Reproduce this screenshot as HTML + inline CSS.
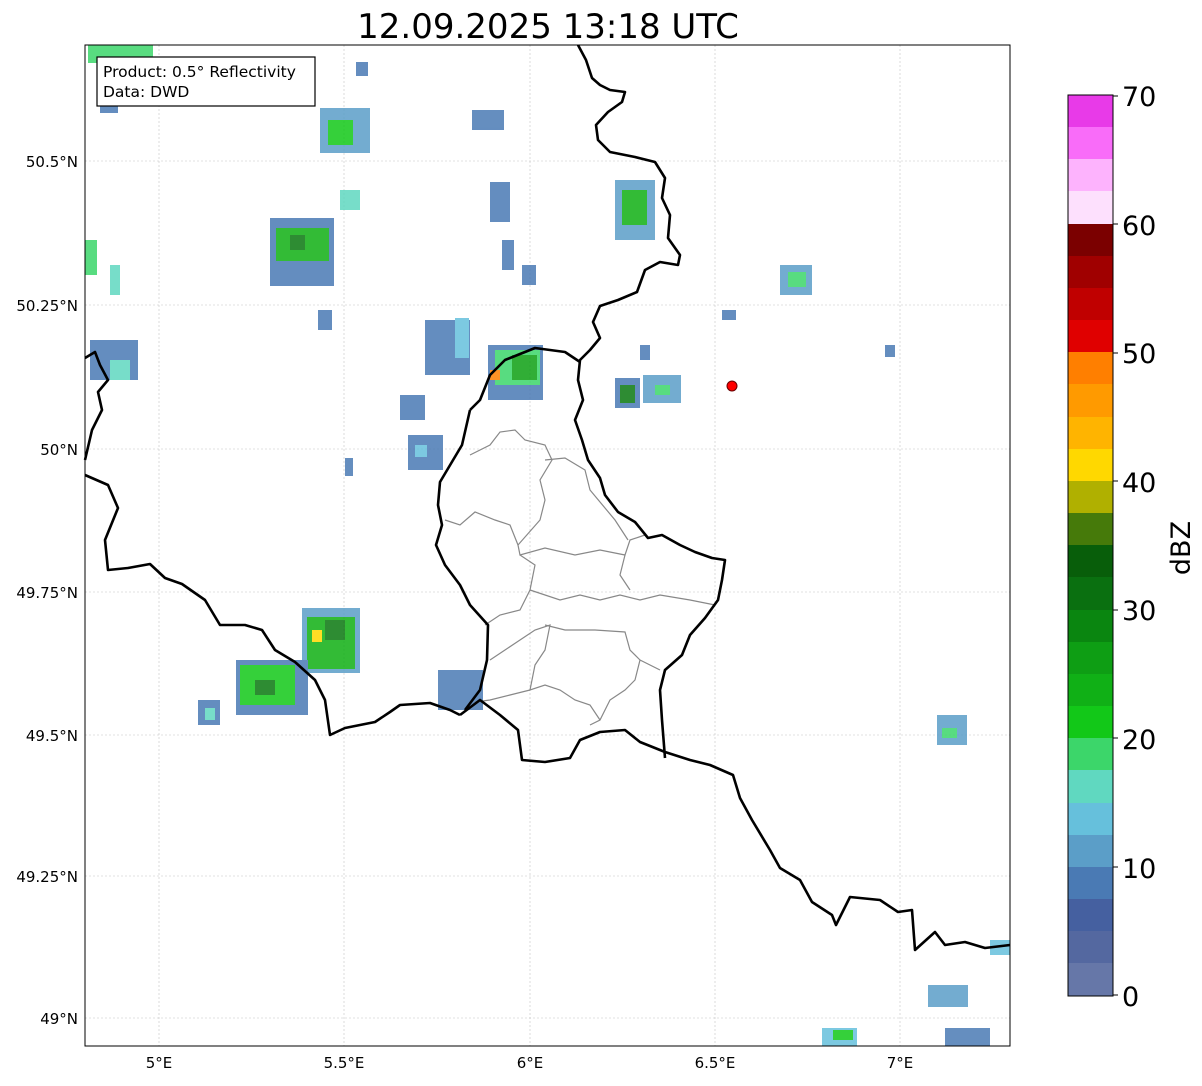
<!DOCTYPE html>
<html><head><meta charset="utf-8"><style>
body{margin:0;background:#fff;width:1202px;height:1081px;overflow:hidden;font-family:"Liberation Sans","DejaVu Sans",sans-serif}
</style></head><body>
<svg width="1202" height="1081" xmlns="http://www.w3.org/2000/svg" font-family="DejaVu Sans, Liberation Sans, sans-serif">
<rect width="1202" height="1081" fill="#fff"/>
<text x="548" y="38" font-size="34" text-anchor="middle" fill="#000">12.09.2025 13:18 UTC</text>
<g stroke="#c4c4c4" stroke-width="0.6" stroke-dasharray="2,2">
<line x1="159" y1="45" x2="159" y2="1046"/><line x1="344" y1="45" x2="344" y2="1046"/><line x1="530" y1="45" x2="530" y2="1046"/><line x1="715" y1="45" x2="715" y2="1046"/><line x1="900" y1="45" x2="900" y2="1046"/>
<line x1="85" y1="161" x2="1010" y2="161"/><line x1="85" y1="305" x2="1010" y2="305"/><line x1="85" y1="449" x2="1010" y2="449"/><line x1="85" y1="592" x2="1010" y2="592"/><line x1="85" y1="735" x2="1010" y2="735"/><line x1="85" y1="876" x2="1010" y2="876"/><line x1="85" y1="1018" x2="1010" y2="1018"/>
</g>
<g opacity="0.85">
<rect x="88" y="45" width="65" height="18" fill="#3cd66a"/><rect x="100" y="63" width="18" height="50" fill="#4a7ab4"/>
<rect x="320" y="108" width="50" height="45" fill="#5b9ec8"/><rect x="328" y="120" width="25" height="25" fill="#12c818"/>
<rect x="356" y="62" width="12" height="14" fill="#4a7ab4"/><rect x="472" y="110" width="32" height="20" fill="#4a7ab4"/>
<rect x="270" y="218" width="64" height="68" fill="#4a7ab4"/><rect x="276" y="228" width="53" height="33" fill="#10b014"/><rect x="290" y="235" width="15" height="15" fill="#0a7810"/>
<rect x="340" y="190" width="20" height="20" fill="#60d8c0"/>
<rect x="85" y="240" width="12" height="35" fill="#3cd66a"/><rect x="110" y="265" width="10" height="30" fill="#60d8c0"/>
<rect x="318" y="310" width="14" height="20" fill="#4a7ab4"/>
<rect x="90" y="340" width="48" height="40" fill="#4a7ab4"/><rect x="110" y="360" width="20" height="20" fill="#60d8c0"/>
<rect x="425" y="320" width="45" height="55" fill="#4a7ab4"/><rect x="455" y="318" width="14" height="40" fill="#66c0dc"/>
<rect x="488" y="345" width="55" height="55" fill="#4a7ab4"/><rect x="495" y="350" width="45" height="35" fill="#3cd66a"/><rect x="512" y="355" width="25" height="25" fill="#0ea014"/><rect x="490" y="370" width="10" height="10" fill="#ff7f00"/>
<rect x="490" y="182" width="20" height="40" fill="#4a7ab4"/><rect x="502" y="240" width="12" height="30" fill="#4a7ab4"/><rect x="522" y="265" width="14" height="20" fill="#4a7ab4"/>
<rect x="615" y="180" width="40" height="60" fill="#5b9ec8"/><rect x="622" y="190" width="25" height="35" fill="#10b014"/>
<rect x="615" y="378" width="25" height="30" fill="#4a7ab4"/><rect x="620" y="385" width="15" height="18" fill="#0a7810"/>
<rect x="643" y="375" width="38" height="28" fill="#5b9ec8"/><rect x="655" y="385" width="15" height="10" fill="#3cd66a"/>
<rect x="640" y="345" width="10" height="15" fill="#4a7ab4"/><rect x="722" y="310" width="14" height="10" fill="#4a7ab4"/>
<rect x="780" y="265" width="32" height="30" fill="#5b9ec8"/><rect x="788" y="272" width="18" height="15" fill="#3cd66a"/>
<rect x="885" y="345" width="10" height="12" fill="#4a7ab4"/>
<rect x="400" y="395" width="25" height="25" fill="#4a7ab4"/><rect x="408" y="435" width="35" height="35" fill="#4a7ab4"/><rect x="415" y="445" width="12" height="12" fill="#66c0dc"/>
<rect x="345" y="458" width="8" height="18" fill="#4a7ab4"/>
<rect x="302" y="608" width="58" height="65" fill="#5b9ec8"/><rect x="307" y="617" width="48" height="52" fill="#10b014"/><rect x="312" y="630" width="10" height="12" fill="#ffd800"/><rect x="325" y="620" width="20" height="20" fill="#0a7810"/>
<rect x="236" y="660" width="72" height="55" fill="#4a7ab4"/><rect x="240" y="665" width="55" height="40" fill="#12c818"/><rect x="255" y="680" width="20" height="15" fill="#0a7810"/>
<rect x="198" y="700" width="22" height="25" fill="#4a7ab4"/><rect x="205" y="708" width="10" height="12" fill="#60d8c0"/>
<rect x="438" y="670" width="45" height="40" fill="#4a7ab4"/>
<rect x="937" y="715" width="30" height="30" fill="#5b9ec8"/><rect x="942" y="728" width="15" height="10" fill="#3cd66a"/>
<rect x="990" y="940" width="20" height="15" fill="#66c0dc"/>
<rect x="928" y="985" width="40" height="22" fill="#5b9ec8"/>
<rect x="822" y="1028" width="35" height="18" fill="#66c0dc"/><rect x="833" y="1030" width="20" height="10" fill="#12c818"/>
<rect x="945" y="1028" width="45" height="18" fill="#4a7ab4"/>
</g>
<g fill="none" stroke="#888" stroke-width="1.2">
<polyline points="470,455 490,445 500,432 515,430 525,440 545,445 552,460 540,480 545,500 540,520 518,545 520,555 545,548 575,555 600,550 625,555 630,540 645,535"/>
<polyline points="445,520 460,525 475,512 495,520 510,525 518,545"/>
<polyline points="545,460 565,458 585,470 590,490 615,520 628,540"/>
<polyline points="520,555 535,565 530,590 520,610 500,615 485,625"/>
<polyline points="530,590 560,600 580,595 600,600 620,595 640,600 660,595 690,600 715,605"/>
<polyline points="625,555 620,575 630,590"/>
<polyline points="545,625 565,630 595,630 625,632 630,650 640,660 635,680 625,690 610,700 600,720 590,725"/>
<polyline points="490,660 505,650 520,640 535,630 550,625 545,650 535,665 530,690 545,685 560,690 575,700 590,705 600,720"/>
<polyline points="530,690 510,695 490,700 475,702"/>
<polyline points="640,660 660,670"/>
</g>
<g fill="none" stroke="#000" stroke-width="2.6" stroke-linejoin="round">
<polyline points="578,45 586,60 592,78 600,85 610,90 625,92 622,102 608,112 596,125 598,140 610,152 635,157 655,162 665,178 662,198 670,215 668,238 680,255 678,265 660,262 645,270 637,292 618,300 600,306 593,322 600,338 590,350 580,360 578,380 583,400 575,420 582,440 588,460 600,478 605,495 618,512 635,522 648,538 662,535 680,545 695,552 712,558 725,560 722,580 718,600 705,618 690,635 682,655 665,670 660,690 662,720 665,758"/>
<polyline points="460,715 480,700 500,715 518,730 522,760 545,762 570,758 580,740 600,732 625,730 640,742 665,752 690,760 710,765 733,775 740,798 752,820 770,850 780,868 800,880 812,902 832,915 836,925 850,897 880,900 898,912 912,910 915,950 935,932 945,945 965,942 985,948 1010,945"/>
<polyline points="470,410 462,445 440,482 438,505 442,525 436,545 445,565 460,585 470,605 488,625 487,660 480,690 465,710"/>
<polyline points="470,410 480,400 490,375 505,360 535,348 565,352 580,362"/>
<polyline points="85,475 108,485 118,508 105,540 108,570 128,568 150,564 165,578 182,584 205,600 220,625 245,625 262,630 275,650 295,662 315,680 325,700 330,735 345,728 375,722 390,712 400,705 430,703 450,710 460,715"/>
<polyline points="85,460 92,430 102,410 98,392 108,380 100,365 95,352 85,358"/>
</g>
<circle cx="732" cy="386" r="5" fill="#f00" stroke="#600" stroke-width="1"/>
<rect x="85" y="45" width="925" height="1001" fill="none" stroke="#000" stroke-width="1"/>
<rect x="97" y="57" width="218" height="49" fill="#fff" stroke="#000" stroke-width="1.2"/>
<text x="103" y="77" font-size="15.5">Product: 0.5° Reflectivity</text>
<text x="103" y="97" font-size="15.5">Data: DWD</text>
<g font-size="15" text-anchor="end">
<text x="78" y="167">50.5°N</text><text x="78" y="311">50.25°N</text><text x="78" y="455">50°N</text><text x="78" y="598">49.75°N</text><text x="78" y="741">49.5°N</text><text x="78" y="882">49.25°N</text><text x="78" y="1024">49°N</text>
</g>
<g font-size="15" text-anchor="middle">
<text x="159" y="1068">5°E</text><text x="344" y="1068">5.5°E</text><text x="530" y="1068">6°E</text><text x="715" y="1068">6.5°E</text><text x="900" y="1068">7°E</text>
</g>
<g>
<rect x="1068" y="95" width="45" height="33" fill="#e83ae8"/>
<rect x="1068" y="127" width="45" height="33" fill="#f96cf9"/>
<rect x="1068" y="159" width="45" height="33" fill="#fdb3fd"/>
<rect x="1068" y="191" width="45" height="33" fill="#fde0fd"/>
<rect x="1068" y="224" width="45" height="33" fill="#7b0000"/>
<rect x="1068" y="256" width="45" height="33" fill="#a00000"/>
<rect x="1068" y="288" width="45" height="33" fill="#c00000"/>
<rect x="1068" y="320" width="45" height="33" fill="#e00000"/>
<rect x="1068" y="352" width="45" height="33" fill="#ff7f00"/>
<rect x="1068" y="384" width="45" height="33" fill="#ff9a00"/>
<rect x="1068" y="417" width="45" height="33" fill="#ffb400"/>
<rect x="1068" y="449" width="45" height="33" fill="#ffd800"/>
<rect x="1068" y="481" width="45" height="33" fill="#b0b000"/>
<rect x="1068" y="513" width="45" height="33" fill="#467a0a"/>
<rect x="1068" y="545" width="45" height="33" fill="#085e0a"/>
<rect x="1068" y="577" width="45" height="33" fill="#0a7010"/>
<rect x="1068" y="610" width="45" height="33" fill="#0a8610"/>
<rect x="1068" y="642" width="45" height="33" fill="#0e9e14"/>
<rect x="1068" y="674" width="45" height="33" fill="#10b016"/>
<rect x="1068" y="706" width="45" height="33" fill="#12c818"/>
<rect x="1068" y="738" width="45" height="33" fill="#3cd66a"/>
<rect x="1068" y="770" width="45" height="33" fill="#60d8c0"/>
<rect x="1068" y="803" width="45" height="33" fill="#66c0dc"/>
<rect x="1068" y="835" width="45" height="33" fill="#5b9ec8"/>
<rect x="1068" y="867" width="45" height="33" fill="#4a7ab4"/>
<rect x="1068" y="899" width="45" height="33" fill="#4560a0"/>
<rect x="1068" y="931" width="45" height="33" fill="#5468a0"/>
<rect x="1068" y="963" width="45" height="33" fill="#6677a8"/>
<rect x="1068" y="95" width="45" height="901" fill="none" stroke="#000" stroke-width="1"/>
</g>
<g font-size="27">
<text x="1122" y="106">70</text><text x="1122" y="235">60</text><text x="1122" y="363">50</text><text x="1122" y="492">40</text><text x="1122" y="620">30</text><text x="1122" y="749">20</text><text x="1122" y="878">10</text><text x="1122" y="1006">0</text>
</g>
<g stroke="#000"><line x1="1113" y1="96" x2="1118" y2="96"/><line x1="1113" y1="224" x2="1118" y2="224"/><line x1="1113" y1="353" x2="1118" y2="353"/><line x1="1113" y1="481" x2="1118" y2="481"/><line x1="1113" y1="610" x2="1118" y2="610"/><line x1="1113" y1="738" x2="1118" y2="738"/><line x1="1113" y1="867" x2="1118" y2="867"/><line x1="1113" y1="995" x2="1118" y2="995"/></g>
<text transform="translate(1190,548) rotate(-90)" font-size="27" text-anchor="middle">dBZ</text>
</svg>
</body></html>
